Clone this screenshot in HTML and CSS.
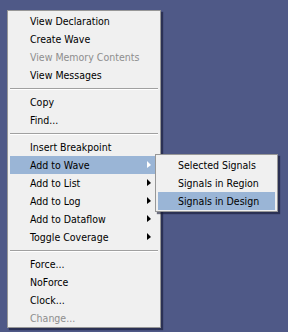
FILE: index.html
```
<!DOCTYPE html>
<html lang="en">
<head>
    <meta charset="UTF-8">
    <title>Context Menu</title>
    <link rel="stylesheet" href="styles.css">
</head>
<body>

    <!-- Main context menu -->
    <div class="menu main-menu">
        <div class="item">View Declaration</div>
        <div class="item">Create Wave</div>
        <div class="item disabled">View Memory Contents</div>
        <div class="item">View Messages</div>
        <div class="separator"></div>
        <div class="item">Copy</div>
        <div class="item">Find...</div>
        <div class="separator"></div>
        <div class="item">Insert Breakpoint</div>
        <div class="item sub active">Add to Wave</div>
        <div class="item sub">Add to List</div>
        <div class="item sub">Add to Log</div>
        <div class="item sub">Add to Dataflow</div>
        <div class="item sub">Toggle Coverage</div>
        <div class="separator"></div>
        <div class="item">Force...</div>
        <div class="item">NoForce</div>
        <div class="item">Clock...</div>
        <div class="item disabled">Change...</div>
    </div>

    <!-- Submenu for Add to Wave -->
    <div class="menu submenu">
        <div class="item">Selected Signals</div>
        <div class="item">Signals in Region</div>
        <div class="item active">Signals in Design</div>
    </div>

</body>
</html>
```
FILE: styles.css
```
* {
    margin: 0;
    padding: 0;
    box-sizing: border-box;
}

body {
    background-color: #4f5987;
    height: 100vh;
    padding: 10px 0 0 7px;
    font-family: "DejaVu Sans Condensed", "DejaVu Sans", sans-serif;
    font-size: 10.5px;
    color: #000;
}

/* Menu box */
.menu {
    background-color: #f0f0f0;
    border: 1px solid #979797;
    padding: 1px 2px;
    box-shadow: 2px 2px 1px rgba(20, 24, 50, 0.6);
}

.main-menu {
    width: 154px;
    padding-bottom: 0;
}

.submenu {
    position: absolute;
    left: 155px;
    top: 154px;
    width: 123px;
}

.item {
    position: relative;
    height: 18px;
    line-height: 18px;
    padding-left: 20px;
    white-space: nowrap;
}

.item.active {
    background-color: #9ab5d6;
}

.item.disabled {
    color: #8e8e8e;
}

/* Submenu arrow */
.item.sub::after {
    content: "";
    position: absolute;
    right: 7px;
    top: 5px;
    border-left: 4px solid #000;
    border-top: 4px solid transparent;
    border-bottom: 3px solid transparent;
}

.item.sub.active::after {
    border-left-color: #fff;
}

.separator {
    height: 9px;
    padding: 4px 0;
}

.separator::before {
    content: "";
    display: block;
    border-top: 1px solid #a0a0a0;
    border-bottom: 1px solid #fff;
}
```
